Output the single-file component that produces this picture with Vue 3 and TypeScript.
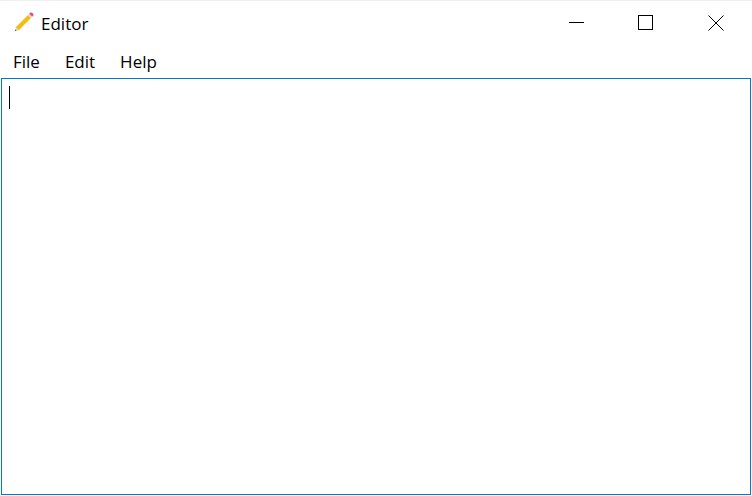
<template>
  <div class="window">
    <header class="titlebar">
      <div class="title">
        <svg class="title__icon" width="20" height="20" viewBox="0 0 20 20">
          <path d="M0.8 19.2 L1.8 15.2 L4.8 18.2 Z" fill="#e3d9bd" />
          <path d="M0.8 19.2 L1.3 17.3 L2.7 18.7 Z" fill="#666" />
          <path d="M1.8 15.2 L14 3 L17 6 L4.8 18.2 Z" fill="#f3bd14" />
          <path d="M14 3 L15.2 1.8 L18.2 4.8 L17 6 Z" fill="#dcdcdc" />
          <path d="M15.2 1.8 L16.4 0.6 Q17.6 0 18.8 1.2 Q20 2.4 19.4 3.6 L18.2 4.8 Z" fill="#e2526f" />
        </svg>
        <span>{{ title }}</span>
      </div>
      <div class="controls">
        <button class="control" aria-label="Minimize">
          <svg width="16" height="16" viewBox="0 0 16 16"><path d="M1 7.5H16" stroke="#000" fill="none" /></svg>
        </button>
        <button class="control" aria-label="Maximize">
          <svg width="16" height="16" viewBox="0 0 16 16"><rect x="0.5" y="0.5" width="14" height="14" stroke="#000" fill="none" /></svg>
        </button>
        <button class="control" aria-label="Close">
          <svg width="16" height="16" viewBox="0 0 16 16"><path d="M0.5 0.5L15.5 15.5M15.5 0.5L0.5 15.5" stroke="#000" fill="none" /></svg>
        </button>
      </div>
    </header>
    <nav class="menubar">
      <span v-for="item in menu" :key="item" class="menubar__item">{{ item }}</span>
    </nav>
    <div class="editor">
      <span class="editor__caret"></span>
    </div>
  </div>
</template>

<script setup lang="ts">
const title = 'Editor'
const menu: string[] = ['File', 'Edit', 'Help']
</script>

<style>
html,
body {
  margin: 0;
  background: #fff;
}
</style>

<style scoped>
.window {
  width: 752px;
  height: 496px;
  box-sizing: border-box;
  display: flex;
  flex-direction: column;
  border-top: 1px solid #f0f0f0;
  padding-bottom: 1px;
  background: #fff;
  color: #000;
  font-family: "Open Sans", "Noto Sans", sans-serif;
  font-size: 17px;
  overflow: hidden;
}

.titlebar {
  display: flex;
  justify-content: space-between;
  height: 44px;
  flex: none;
}

.title {
  display: flex;
  align-items: center;
  gap: 7px;
  padding-left: 14px;
}

.title__icon {
  display: block;
  margin-top: -2px;
}

.controls {
  display: flex;
  padding-right: 1px;
}

.control {
  width: 70px;
  padding: 0;
  border: 0;
  background: none;
  display: flex;
  align-items: center;
  justify-content: center;
}

.menubar {
  display: flex;
  gap: 25px;
  height: 32px;
  margin-bottom: 1px;
  flex: none;
  align-items: center;
  padding-left: 13px;
}

.editor {
  flex: 1;
  margin: 0 1px;
  border: 1px solid #0078d7;
  padding: 7px;
}

.editor__caret {
  display: block;
  width: 1px;
  height: 23px;
  background: #000;
}
</style>
